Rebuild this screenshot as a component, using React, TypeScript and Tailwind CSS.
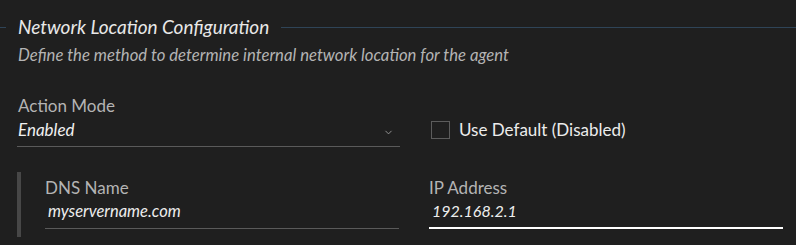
import { ChevronDown } from "lucide-react";

function Field({ label, value, active }: { label: string; value: string; active?: boolean }) {
  return (
    <div className="flex w-[354px] flex-col">
      <label className="text-[17px] leading-[20px] text-[#b4b4b4]">{label}</label>
      <div
        className={
          active
            ? "mt-[3px] border-b-2 border-white pb-[6px] pl-[3px] text-[16px] italic leading-[20px] text-[#ededed]"
            : "mt-[3px] border-b border-[#5a5a5a] pb-[7px] pl-[3px] text-[16.5px] italic leading-[20px] text-[#ededed]"
        }
      >
        {value}
      </div>
    </div>
  );
}

export default function App() {
  return (
    <div className="h-[245px] w-[796px] overflow-hidden bg-[#1f1f1f] font-['Lato',sans-serif]">
      {/* fieldset legend */}
      <div className="flex items-center pt-[15px]">
        <div className="h-px w-[6px] bg-[#2f4457]" />
        <h2 className="px-[12px] text-[19px] italic leading-[24px] text-[#e8e8e8]">
          Network Location Configuration
        </h2>
        <div className="h-px flex-1 bg-[#2f4457]" />
      </div>
      <p className="mt-[6px] pl-[18px] text-[16.7px] italic leading-[20px] text-[#b4b4b4]">
        Define the method to determine internal network location for the agent
      </p>

      <div className="mt-[31px] flex items-end gap-[31px] pl-[17px]">
        <div className="flex w-[383px] flex-col">
          <label className="pl-px text-[17px] leading-[20px] text-[#b4b4b4]">Action Mode</label>
          <div className="mt-[4px] flex items-center justify-between border-b border-[#5a5a5a] pb-[6px] pl-px pr-[6px]">
            <span className="text-[17px] italic leading-[20px] text-[#f0f0f0]">Enabled</span>
            <ChevronDown className="mt-[4px] h-[11px] w-[11px] text-[#9a9a9a]" strokeWidth={2} />
          </div>
        </div>
        <label className="mb-[7px] flex items-center gap-[9px]">
          <span className="h-[18px] w-[19px] border border-[#5c5c5c]" />
          <span className="text-[17px] leading-[20px] text-[#ececec]">Use Default (Disabled)</span>
        </label>
      </div>

      <div className="mt-[25px] ml-[17px] flex h-[65px] gap-[30px] border-l-4 border-[#474747] pl-[24px] pt-[6px]">
        <Field label="DNS Name" value="myservername.com" />
        <Field label="IP Address" value="192.168.2.1" active />
      </div>
    </div>
  );
}
